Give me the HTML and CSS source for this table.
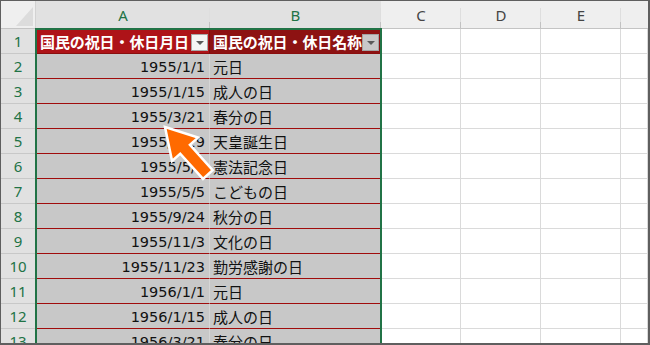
FILE: index.html
```html
<!DOCTYPE html>
<html lang="ja">
<head>
<meta charset="utf-8">
<title>国民の祝日・休日</title>
<link rel="stylesheet" href="styles.css">
</head>
<body>
<div class="sheet">
  <div class="grid">
    <div class="corner"></div>
    <div class="colhdr sel">A</div>
    <div class="colhdr sel">B</div>
    <div class="colhdr">C</div>
    <div class="colhdr">D</div>
    <div class="colhdr">E</div>
    <div class="colhdr edge"></div>

    <div class="rowhdr">1</div>
    <div class="th th-a"><span class="th-text">国民の祝日・休日月日</span><span class="filter filter-active"></span></div>
    <div class="th th-b"><span class="th-text">国民の祝日・休日名称</span><span class="filter"></span></div>
    <div class="cell"></div><div class="cell"></div><div class="cell"></div><div class="cell"></div>

    <div class="rowhdr">2</div><div class="date">1955/1/1</div><div class="name">元日</div>
    <div class="cell"></div><div class="cell"></div><div class="cell"></div><div class="cell"></div>

    <div class="rowhdr">3</div><div class="date">1955/1/15</div><div class="name">成人の日</div>
    <div class="cell"></div><div class="cell"></div><div class="cell"></div><div class="cell"></div>

    <div class="rowhdr">4</div><div class="date">1955/3/21</div><div class="name">春分の日</div>
    <div class="cell"></div><div class="cell"></div><div class="cell"></div><div class="cell"></div>

    <div class="rowhdr">5</div><div class="date">1955/4/29</div><div class="name">天皇誕生日</div>
    <div class="cell"></div><div class="cell"></div><div class="cell"></div><div class="cell"></div>

    <div class="rowhdr">6</div><div class="date">1955/5/3</div><div class="name">憲法記念日</div>
    <div class="cell"></div><div class="cell"></div><div class="cell"></div><div class="cell"></div>

    <div class="rowhdr">7</div><div class="date">1955/5/5</div><div class="name">こどもの日</div>
    <div class="cell"></div><div class="cell"></div><div class="cell"></div><div class="cell"></div>

    <div class="rowhdr">8</div><div class="date">1955/9/24</div><div class="name">秋分の日</div>
    <div class="cell"></div><div class="cell"></div><div class="cell"></div><div class="cell"></div>

    <div class="rowhdr">9</div><div class="date">1955/11/3</div><div class="name">文化の日</div>
    <div class="cell"></div><div class="cell"></div><div class="cell"></div><div class="cell"></div>

    <div class="rowhdr">10</div><div class="date">1955/11/23</div><div class="name">勤労感謝の日</div>
    <div class="cell"></div><div class="cell"></div><div class="cell"></div><div class="cell"></div>

    <div class="rowhdr">11</div><div class="date">1956/1/1</div><div class="name">元日</div>
    <div class="cell"></div><div class="cell"></div><div class="cell"></div><div class="cell"></div>

    <div class="rowhdr">12</div><div class="date">1956/1/15</div><div class="name">成人の日</div>
    <div class="cell"></div><div class="cell"></div><div class="cell"></div><div class="cell"></div>

    <div class="rowhdr">13</div><div class="date">1956/3/21</div><div class="name">春分の日</div>
    <div class="cell"></div><div class="cell"></div><div class="cell"></div><div class="cell"></div>
  </div>

  <!-- selected range A1:B13 -->
  <div class="selection"></div>

  <!-- callout arrow pointing at the date cell -->
  <svg class="pointer" width="650" height="345" viewBox="0 0 650 345">
    <polygon transform="translate(165 127) rotate(-42)"
             points="0,0 17.5,30 6.5,30 6.5,64 -6.5,64 -6.5,30 -17.5,30"
             fill="#ff6a00" stroke="#ffffff" stroke-width="2.5" stroke-linejoin="miter"/>
  </svg>
</div>
</body>
</html>
```

FILE: styles.css
```css
* {
  box-sizing: border-box;
}

html, body {
  margin: 0;
  padding: 0;
  background: #ffffff;
}

.sheet {
  position: relative;
  width: 650px;
  height: 345px;
  overflow: hidden;
  border-top: 1px solid #5f5f5f;
  border-left: 1px solid #5f5f5f;
  border-right: 2px solid #5f5f5f;
  border-bottom: 2px solid #5f5f5f;
  font-family: "Noto Sans CJK JP", "Noto Sans", sans-serif;
  color: #1b1b1b;
}

.grid {
  display: grid;
  grid-template-columns: 35px 174px 171px 80px 80px 80px 1fr;
  grid-template-rows: 28px repeat(13, 25px);
}

.grid > div {
  overflow: hidden;
  white-space: nowrap;
}

/* headers */
.corner {
  position: relative;
  background: #efefef;
  border-right: 1px solid #d2d2d2;
  border-bottom: 1px solid #c4c4c4;
}

.corner::after {
  content: "";
  position: absolute;
  right: 2px;
  bottom: 2px;
  width: 17px;
  height: 19px;
  background: #dcdcdc;
  clip-path: polygon(100% 0, 100% 100%, 0 100%);
}

.colhdr {
  position: relative;
  background: #efefef;
  border-bottom: 1px solid #c4c4c4;
  display: flex;
  align-items: center;
  justify-content: center;
  font-family: "Noto Sans", "Open Sans", sans-serif;
  font-size: 15px;
  color: #444444;
  padding-top: 1px;
}

.colhdr::after {
  content: "";
  position: absolute;
  right: 0;
  top: 7px;
  bottom: 0;
  width: 1px;
  background: linear-gradient(#dedede 0 70%, #c2c2c2 70% 100%);
}

.colhdr.edge::after {
  display: none;
}

.colhdr.sel {
  background: #e1e1e1;
  color: #217346;
}

.rowhdr {
  background: #e1e1e1;
  border-right: 1px solid #c4c4c4;
  border-bottom: 1px solid #c8c8c8;
  display: flex;
  align-items: center;
  justify-content: center;
  font-family: "Noto Sans", "Open Sans", sans-serif;
  font-size: 15px;
  color: #217346;
}

/* empty worksheet cells */
.cell {
  background: #ffffff;
  border-right: 1px solid #dadada;
  border-bottom: 1px solid #dadada;
}

/* table header row */
.th {
  position: relative;
  display: flex;
  align-items: center;
  color: #ffffff;
  font-weight: bold;
  font-size: 15px;
  letter-spacing: -0.1px;
  border-right: 1px solid #7a0d0d;
  border-bottom: 1px solid #8a0e0e;
}

.th-a {
  background: #ae1318;
  padding-left: 4px;
}

.th-b {
  background: #8d1212;
  padding-left: 3px;
}

.filter {
  position: absolute;
  right: 1px;
  top: 5px;
  width: 17px;
  height: 17px;
  background: #c9c9c9;
  border: 1px solid #a3a3a3;
}

.filter-active {
  background: #f4f4f4;
  border-color: #a8a8a8;
}

.filter::after {
  content: "";
  position: absolute;
  left: 4px;
  top: 6px;
  border-left: 4px solid transparent;
  border-right: 4px solid transparent;
  border-top: 4px solid #5a5a5a;
}

/* table body */
.date,
.name {
  background: #c8c8c8;
  border-bottom: 1px solid #a00c0c;
  display: flex;
  align-items: center;
  color: #111111;
}

.date {
  justify-content: flex-end;
  padding-right: 4px;
  padding-top: 1px;
  border-right: 1px solid #d6d6d6;
  font-family: "DejaVu Sans", "Noto Sans CJK JP", sans-serif;
  font-size: 14.5px;
}

.name {
  padding-left: 3px;
  border-right: 1px solid #d6d6d6;
  font-size: 15px;
}

/* overlays */
.selection {
  position: absolute;
  left: 34px;
  top: 27px;
  width: 347px;
  height: 400px;
  border: 2px solid #217346;
  pointer-events: none;
}

.pointer {
  position: absolute;
  left: -1px;
  top: -1px;
  pointer-events: none;
}
```
